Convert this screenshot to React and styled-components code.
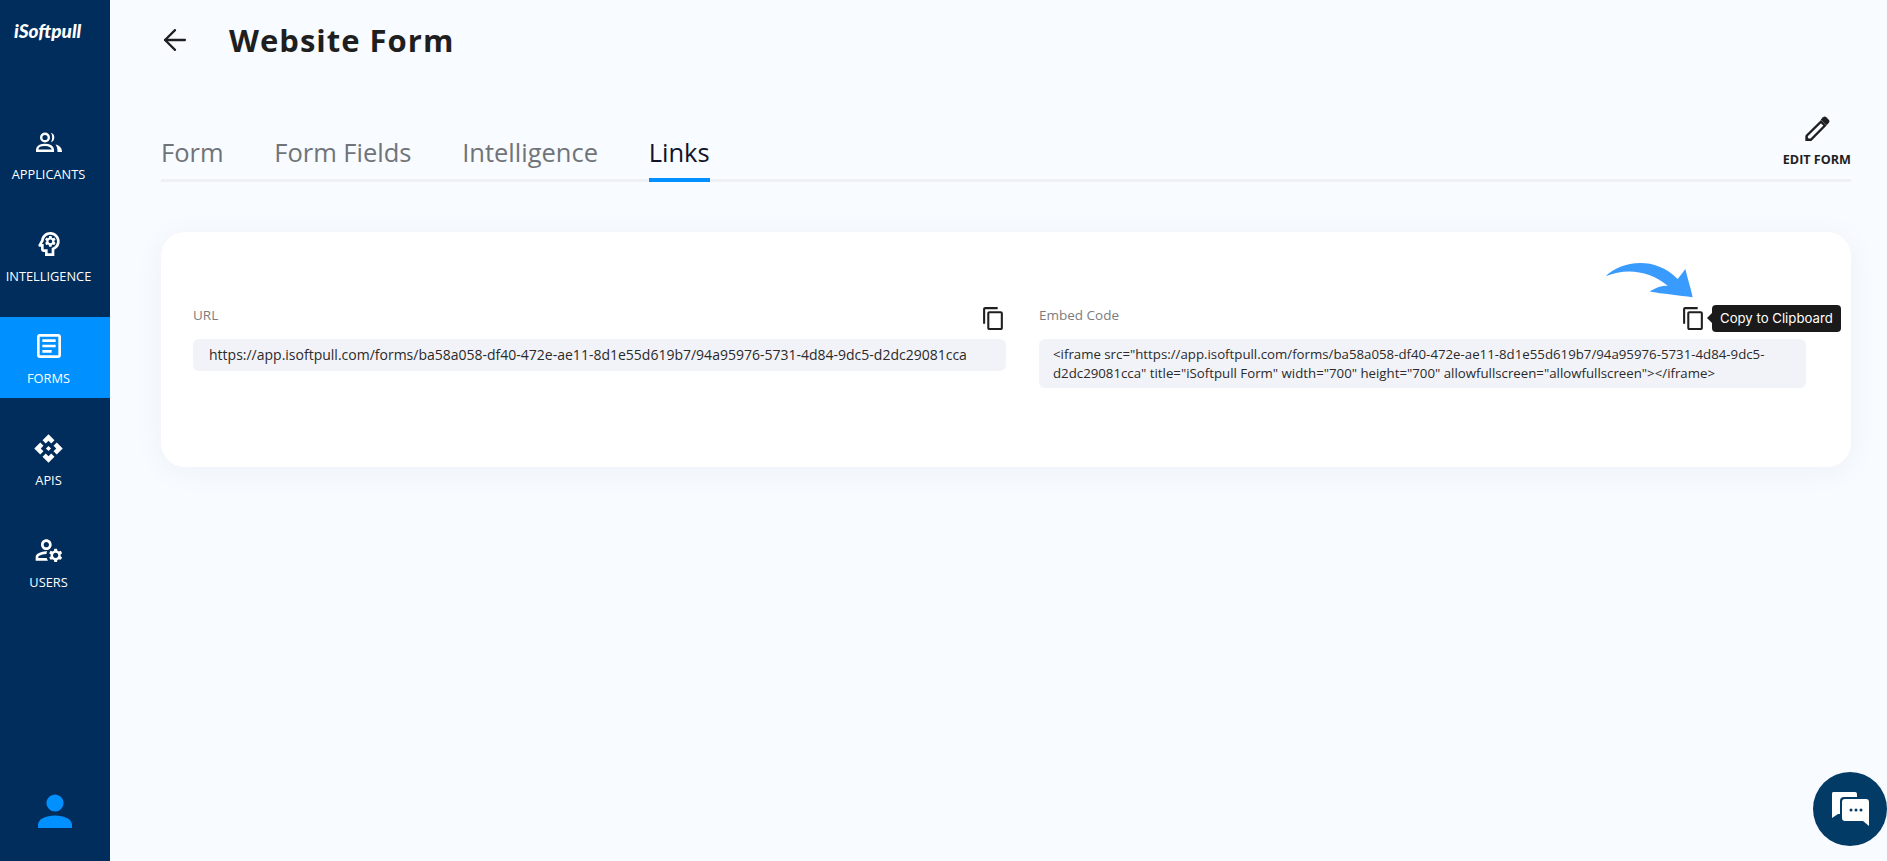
import styled, { createGlobalStyle } from 'styled-components';
import { ArrowLeft } from 'lucide-react';
import {
  MdApi,
  MdContentCopy,
  MdOutlineArticle,
  MdOutlineManageAccounts,
  MdOutlinePsychology,
} from 'react-icons/md';

const ApplicantsIcon = () => (
  <svg width="32" height="32" viewBox="-3 -6 32 32" fill="none" aria-hidden="true">
    <circle cx="9" cy="5.500" r="3.800" stroke="currentColor" strokeWidth="2.400" />
    <path
      d="M1.200 18.800v-1.300c0-3 3.700-4.600 7.800-4.600s7.800 1.600 7.800 4.600v1.300z"
      stroke="currentColor"
      strokeWidth="2.400"
    />
    <path d="M15 .8a5 5 0 0 1 0 9.400c1.600-2.800 1.600-6.600 0-9.400z" fill="currentColor" />
    <path d="M19.500 12.500c3.200.8 6.500 2.600 6.500 7.500h-4.500c0-3.200-.5-5.500-2-7.500z" fill="currentColor" />
  </svg>
);

const NAV_ITEMS = [
  { label: 'APPLICANTS', icon: <ApplicantsIcon /> },
  { label: 'INTELLIGENCE', icon: <MdOutlinePsychology size={32} /> },
  { label: 'FORMS', icon: <MdOutlineArticle size={32} />, active: true },
  { label: 'APIS', icon: <MdApi size={31} /> },
  { label: 'USERS', icon: <MdOutlineManageAccounts size={32} /> },
];

const TABS = ['Form', 'Form Fields', 'Intelligence', 'Links'];

const FORM_URL =
  'https://app.isoftpull.com/forms/ba58a058-df40-472e-ae11-8d1e55d619b7/94a95976-5731-4d84-9dc5-d2dc29081cca';

const EMBED_CODE = `<iframe src="${FORM_URL}" title="iSoftpull Form" width="700" height="700" allowfullscreen="allowfullscreen"></iframe>`;

const App = () => (
  <>
    <GlobalStyle />
    <Page>
      <Sidebar>
        <Logo>iSoftpull</Logo>
        <Nav>
          {NAV_ITEMS.map(({ label, icon, active }) => (
            <NavItem key={label} $active={active}>
              <NavIcon>{icon}</NavIcon>
              <span>{label}</span>
            </NavItem>
          ))}
        </Nav>
        <Avatar viewBox="0 0 36 36" aria-hidden="true">
          <circle cx="18" cy="9" r="8.600" />
          <path d="M1 34v-3c0-6 8-9.500 17-9.500S35 25 35 31v3z" />
        </Avatar>
      </Sidebar>
      <Main>
        <TitleRow>
          <ArrowLeft size={34} strokeWidth={1.6} />
          <Title>Website Form</Title>
        </TitleRow>
        <TabBar>
          {TABS.map((tab) => (
            <Tab key={tab} $active={tab === 'Links'}>
              {tab}
            </Tab>
          ))}
          <EditButton>
            <svg width="32" height="32" viewBox="0 0 28 28" aria-hidden="true">
              <path
                d="M17.500 7.500l3.500 3.500L8.600 23.400H5v-3.500z"
                fill="none"
                stroke="#1f1f1f"
                strokeWidth="2"
              />
              <path d="M19.300 3.700a2 2 0 0 1 2.800 0l2.200 2.200a2 2 0 0 1 0 2.800l-2 2-5-5z" fill="#1f1f1f" />
              <path d="M4 20l4.500 4.500H4z" fill="#1f1f1f" />
            </svg>
            EDIT FORM
          </EditButton>
        </TabBar>
        <Card>
          <Column>
            <FieldHeader $reserve={0}>
              <FieldLabel>URL</FieldLabel>
              <MdContentCopy size={25} color="#1f1f1f" />
            </FieldHeader>
            <FieldValue>{FORM_URL}</FieldValue>
          </Column>
          <Column>
            <FieldHeader $reserve={100}>
              <FieldLabel>Embed Code</FieldLabel>
              <CopyWithTip>
                <CurvedArrow viewBox="130 470 280 120" aria-hidden="true">
                  <path d="M138 522C180 480 280 455 355 530L378 500C385 530 395 560 400 585C360 580 310 575 270 568C290 555 305 550 325 550C270 505 200 495 138 522Z" />
                </CurvedArrow>
                <MdContentCopy size={25} color="#1f1f1f" />
                <Tooltip>Copy to Clipboard</Tooltip>
              </CopyWithTip>
            </FieldHeader>
            <FieldValue $compact>{EMBED_CODE}</FieldValue>
          </Column>
        </Card>
      </Main>
      <ChatBubble>
        <svg width="40" height="36" viewBox="0 0 40 36" aria-hidden="true">
          <path d="M3 1h22a2 2 0 0 1 2 2v3H14a4 4 0 0 0-4 4v13H8l-6 4V3a2 2 0 0 1 1-2z" fill="#fff" />
          <path
            d="M15 8h21a3 3 0 0 1 3 3v24l-6-5H15a3 3 0 0 1-3-3V11a3 3 0 0 1 3-3z"
            fill="#fff"
          />
          <circle cx="21" cy="19" r="1.500" fill="#023b66" />
          <circle cx="26" cy="19" r="1.500" fill="#023b66" />
          <circle cx="31" cy="19" r="1.500" fill="#023b66" />
        </svg>
      </ChatBubble>
    </Page>
  </>
);

export default App;

const GlobalStyle = createGlobalStyle`
  html, body {
    margin: 0;
    padding: 0;
    height: 100%;
    overflow: hidden;
    background: #f8fbff;
    font-family: "Open Sans", "Liberation Sans", sans-serif;
  }
`;

const Page = styled.div`
  position: relative;
  display: flex;
  height: 861px;
  overflow: hidden;
`;

const Sidebar = styled.aside`
  flex: 0 0 110px;
  display: flex;
  flex-direction: column;
  align-items: center;
  background: #002d5b;
  color: #fff;
`;

const Logo = styled.div`
  width: 100%;
  padding: 20px 0 0 14px;
  box-sizing: border-box;
  font-family: "Lato", sans-serif;
  font-size: 19px;
  font-weight: 900;
  font-style: italic;
  line-height: 22px;
`;

const Nav = styled.nav`
  display: flex;
  flex-direction: column;
  gap: 21px;
  width: 100%;
  margin-top: 71px;
`;

const NavItem = styled.a`
  display: flex;
  flex-direction: column;
  align-items: center;
  height: 81px;
  padding: 13px 13px 0 0;
  box-sizing: border-box;
  font-size: 12.800px;
  line-height: 18px;
  background: ${({ $active }) => ($active ? '#0090ff' : 'transparent')};
  span {
    margin-top: 7px;
  }
`;

const NavIcon = styled.div`
  display: flex;
  align-items: center;
  justify-content: center;
  width: 32px;
  height: 32px;
`;

const Avatar = styled.svg`
  width: 36px;
  height: 36px;
  margin-top: auto;
  margin-bottom: 31px;
  fill: #0090ff;
`;

const Main = styled.main`
  flex: 1;
  min-width: 0;
  padding: 0 36px 0 51px;
`;

const TitleRow = styled.div`
  display: flex;
  align-items: center;
  gap: 37px;
  height: 79px;
  margin-left: -3px;
  color: #1f1f1f;
`;

const Title = styled.h1`
  margin: 0;
  font-size: 31px;
  font-weight: 700;
  letter-spacing: 1px;
`;

const TabBar = styled.div`
  display: flex;
  align-items: flex-end;
  gap: 50.700px;
  height: 100px;
  border-bottom: 3px solid #eef0f3;
`;

const Tab = styled.div`
  margin-bottom: -3px;
  padding-bottom: 8px;
  font-size: 25.500px;
  line-height: 36px;
  color: ${({ $active }) => ($active ? '#12122a' : '#707478')};
  border-bottom: 4px solid ${({ $active }) => ($active ? '#0090ff' : 'transparent')};
`;

const EditButton = styled.div`
  display: flex;
  flex-direction: column;
  align-items: center;
  gap: 6px;
  margin-left: auto;
  padding-bottom: 10px;
  font-size: 12.600px;
  font-weight: 700;
  line-height: 18px;
  color: #1f1f1f;
`;

const Card = styled.section`
  display: grid;
  grid-template-columns: 813px 767px;
  gap: 33px;
  align-items: start;
  height: 235px;
  margin-top: 50px;
  padding: 72px 32px 0;
  box-sizing: border-box;
  background: #fff;
  border-radius: 24px;
  box-shadow: 0 4px 30px rgba(30, 60, 110, 0.05);
`;

const Column = styled.div`
  min-width: 0;
`;

const FieldHeader = styled.div`
  display: flex;
  align-items: center;
  justify-content: space-between;
  height: 28px;
  margin-bottom: 7px;
  padding-right: ${({ $reserve }) => $reserve}px;
`;

const FieldLabel = styled.label`
  padding-bottom: 7px;
  font-size: 13.500px;
  color: #7c7c7c;
`;

const FieldValue = styled.div`
  padding: ${({ $compact }) => ($compact ? '6px 14px 5px' : '6px 16px')};
  font-size: ${({ $compact }) => ($compact ? '13.250px' : '14px')};
  line-height: ${({ $compact }) => ($compact ? '19px' : '20px')};
  color: #2a2a2a;
  background: #f2f3f8;
  border-radius: 6px;
`;

const CopyWithTip = styled.div`
  position: relative;
  display: flex;
`;

const CurvedArrow = styled.svg`
  position: absolute;
  top: -47px;
  right: 10px;
  width: 93px;
  height: 40px;
  fill: #3a9bff;
`;

const Tooltip = styled.div`
  position: absolute;
  top: -1px;
  left: 31px;
  padding: 0 8px;
  font-family: "Inter", sans-serif;
  font-size: 13.200px;
  line-height: 27px;
  white-space: nowrap;
  color: #fff;
  background: #1a1a1a;
  border-radius: 4px;
  &::before {
    content: '';
    position: absolute;
    top: 8px;
    left: -5px;
    border-style: solid;
    border-width: 5px 5px 5px 0;
    border-color: transparent #1a1a1a transparent transparent;
  }
`;

const ChatBubble = styled.div`
  position: absolute;
  left: 1813px;
  top: 772px;
  display: flex;
  align-items: center;
  justify-content: center;
  width: 74px;
  height: 74px;
  background: #023b66;
  border-radius: 50%;
`;
